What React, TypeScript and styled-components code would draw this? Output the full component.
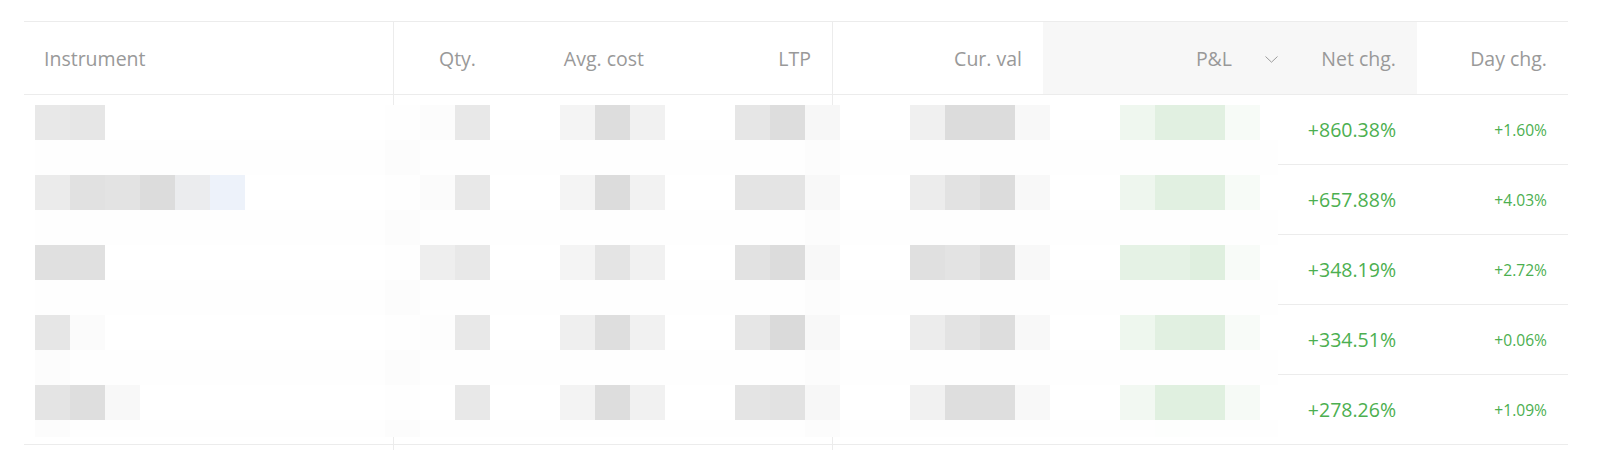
import React from 'react';
import styled, { createGlobalStyle } from 'styled-components';

const GlobalStyle = createGlobalStyle`
    html, body {
        margin: 0;
        padding: 0;
        background: #ffffff;
    }
    body {
        font-family: 'Open Sans', 'Liberation Sans', sans-serif;
    }
`;

const COLUMNS = '370px 103px 168px 168px 210px 256px 118px 151px';
const LINE = '#ececec';
const GREEN = '#4caf50';

const Page = styled.div`
    width: 1600px;
    height: 450px;
    overflow: hidden;
    box-sizing: border-box;
    padding: 21px 32px 0 24px;
`;

const Table = styled.div`
    width: 1544px;
`;

const HeadRow = styled.div`
    display: grid;
    grid-template-columns: ${COLUMNS};
    height: 74px;
    box-sizing: border-box;
    border-top: 1px solid ${LINE};
    border-bottom: 1px solid ${LINE};
`;

const HeadCell = styled.div<{ $left?: boolean; $divider?: boolean; $sorted?: boolean }>`
    display: flex;
    align-items: center;
    justify-content: ${(p) => (p.$left ? 'flex-start' : 'flex-end')};
    box-sizing: border-box;
    padding: 0 21px 0 20px;
    font-size: 19.5px;
    color: #999999;
    white-space: nowrap;
    border-right: ${(p) => (p.$divider ? `1px solid ${LINE}` : 'none')};
    background: ${(p) => (p.$sorted ? '#f7f7f7' : 'transparent')};
`;

const SortIcon = styled.svg`
    margin-left: 33px;
    width: 13px;
    height: 7px;
    margin-top: 2px;
`;

const Body = styled.div`
    position: relative;
`;

const Row = styled.div`
    display: grid;
    grid-template-columns: ${COLUMNS};
    height: 70px;
    box-sizing: border-box;
    border-bottom: 1px solid ${LINE};
`;

const Cell = styled.div<{ $divider?: boolean; $small?: boolean }>`
    display: flex;
    align-items: center;
    justify-content: flex-end;
    box-sizing: border-box;
    padding: 0 21px 0 20px;
    font-size: ${(p) => (p.$small ? '15.6px' : '19.5px')};
    color: ${GREEN};
    border-right: ${(p) => (p.$divider ? `1px solid ${LINE}` : 'none')};
`;

// pixelated (redacted) part of the table, 35px blocks
const Mosaic = styled.div`
    position: absolute;
    top: 10px;
    left: 0;
    display: grid;
    grid-template-columns: 11px repeat(35, 35px) 18px;
    grid-template-rows: repeat(9, 35px) 17px;
`;

const Block = styled.div<{ $tone: string }>`
    background: ${(p) => p.$tone};
`;

const COL_X = [24, ...Array.from({ length: 36 }, (_, i) => 35 + i * 35)];
const ROW_Y = Array.from({ length: 10 }, (_, i) => 105 + i * 35);

const BLOCKS: Record<number, Record<number, string>> = {
    105: {
        35: '#e8e8e8', 70: '#e6e6e6',
        420: '#fcfcfc', 455: '#e8e8e8',
        560: '#f4f4f4', 595: '#dddddd', 630: '#f1f1f1',
        735: '#e6e6e6', 770: '#dddddd', 805: '#f7f7f7',
        910: '#f0f0f0', 945: '#dcdcdc', 980: '#dcdcdc', 1015: '#f8f8f8',
        1120: '#eff7ef', 1155: '#e1f0e1', 1190: '#e1f0e1', 1225: '#f7fbf7',
    },
    175: {
        35: '#ebebeb', 70: '#e1e1e1', 105: '#e3e3e3', 140: '#dcdcdc', 175: '#ebecee', 210: '#edf2fa',
        420: '#fbfbfb', 455: '#e8e8e8',
        560: '#f4f4f4', 595: '#dcdcdc', 630: '#f2f2f2',
        735: '#e4e4e4', 770: '#e4e4e4', 805: '#f8f8f8',
        910: '#ececec', 945: '#e2e2e2', 980: '#dcdcdc', 1015: '#f8f8f8',
        1120: '#eef6ee', 1155: '#e1f0e1', 1190: '#e1f0e1', 1225: '#f7fbf7',
    },
    245: {
        35: '#e0e0e0', 70: '#e0e0e0',
        420: '#eeeeee', 455: '#e8e8e8',
        560: '#f4f4f4', 595: '#e4e4e4', 630: '#f1f1f1',
        735: '#e2e2e2', 770: '#dcdcdc', 805: '#f8f8f8',
        910: '#e0e0e0', 945: '#e3e3e3', 980: '#dcdcdc', 1015: '#f8f8f8',
        1120: '#e5f2e5', 1155: '#e5f2e5', 1190: '#dfefdf', 1225: '#f8fbf8',
    },
    315: {
        35: '#e6e6e6', 70: '#fbfbfb',
        420: '#fdfdfd', 455: '#e8e8e8',
        560: '#efefef', 595: '#dedede', 630: '#f1f1f1',
        735: '#e6e6e6', 770: '#dadada', 805: '#f8f8f8',
        910: '#ececec', 945: '#e3e3e3', 980: '#dddddd', 1015: '#f8f8f8',
        1120: '#eef7ee', 1155: '#e1f0e1', 1190: '#e0efe0', 1225: '#f8fbf8',
    },
    350: { 35: '#fcfcfc' },
    385: {
        35: '#e4e4e4', 70: '#dedede', 105: '#f8f8f8',
        455: '#e8e8e8',
        560: '#f3f3f3', 595: '#dddddd', 630: '#f1f1f1',
        735: '#e4e4e4', 770: '#e2e2e2', 805: '#f7f7f7',
        910: '#f1f1f1', 945: '#dedede', 980: '#dedede', 1015: '#f8f8f8',
        1120: '#f2f8f2', 1155: '#e0f0e0', 1190: '#e0f0e0', 1225: '#f6faf6',
    },
    420: { 35: '#fcfcfc', 1155: '#fdfefd' },
};

const toneAt = (x: number, y: number) => {
    const picked = BLOCKS[y]?.[x];
    if (picked) return picked;
    const between = (y - 105) % 70 === 35;
    if (x === 385) return between ? '#fcfcfc' : '#fefefe';
    if (x === 805 && between) return '#fcfcfc';
    if (x === 24) return '#ffffff';
    return between ? '#fefefe' : '#ffffff';
};

const holdings = [
    { net: '+860.38%', day: '+1.60%' },
    { net: '+657.88%', day: '+4.03%' },
    { net: '+348.19%', day: '+2.72%' },
    { net: '+334.51%', day: '+0.06%' },
    { net: '+278.26%', day: '+1.09%' },
    { net: '', day: '' },
];

const App = () => {
    return (
        <Page>
            <GlobalStyle />
            <Table>
                <HeadRow>
                    <HeadCell $left $divider>
                        Instrument
                    </HeadCell>
                    <HeadCell>Qty.</HeadCell>
                    <HeadCell>Avg. cost</HeadCell>
                    <HeadCell $divider>LTP</HeadCell>
                    <HeadCell>Cur. val</HeadCell>
                    <HeadCell $sorted>
                        P&amp;L
                        <SortIcon viewBox={'0 0 13 7'}>
                            <polyline
                                points={'0.5,0.5 6.5,6.2 12.5,0.5'}
                                fill={'none'}
                                stroke={'#9b9b9b'}
                                strokeWidth={1}
                            />
                        </SortIcon>
                    </HeadCell>
                    <HeadCell $sorted>Net chg.</HeadCell>
                    <HeadCell>Day chg.</HeadCell>
                </HeadRow>
                <Body>
                    {holdings.map((h, i) => (
                        <Row key={i}>
                            <Cell $divider />
                            <Cell />
                            <Cell />
                            <Cell $divider />
                            <Cell />
                            <Cell />
                            <Cell>{h.net}</Cell>
                            <Cell $small>{h.day}</Cell>
                        </Row>
                    ))}
                    <Mosaic>
                        {ROW_Y.map((y) =>
                            COL_X.map((x) => (
                                <Block key={`${x}-${y}`} $tone={toneAt(x, y)} />
                            ))
                        )}
                    </Mosaic>
                </Body>
            </Table>
        </Page>
    );
};

export default App;
